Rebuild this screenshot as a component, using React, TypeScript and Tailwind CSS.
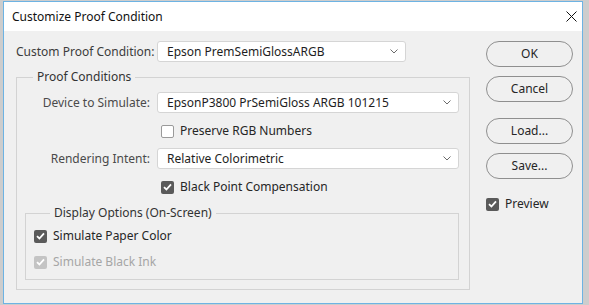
import React from "react";

const font = { fontFamily: '"Noto Sans", "Open Sans", sans-serif' };

const Chevron = () => (
  <svg width="8" height="5" viewBox="0 0 8 5" className="shrink-0">
    <path d="M0.5 0.5 L4 4 L7.5 0.5" fill="none" stroke="#6b6b6b" strokeWidth="1" />
  </svg>
);

interface SelectProps {
  value: string;
  width: string;
}

const Select: React.FC<SelectProps> = ({ value, width }) => (
  <div
    className={`${width} h-[21px] bg-white border border-[#d5d5d5] rounded-[3px] flex items-center justify-between pl-[9px] pr-[7px] text-[12px] text-[#1e1e1e]`}
  >
    <span className="leading-none whitespace-nowrap">{value}</span>
    <Chevron />
  </div>
);

interface CheckProps {
  label: string;
  checked?: boolean;
  disabled?: boolean;
}

const Check: React.FC<CheckProps> = ({ label, checked, disabled }) => (
  <div className="h-[20px] flex items-center gap-[6px]">
    {checked ? (
      <span
        className={`w-[13px] h-[13px] rounded-[2px] flex items-center justify-center ${
          disabled ? "bg-[#c4c4c4]" : "bg-[#5a5a5a]"
        }`}
      >
        <svg width="9" height="8" viewBox="0 0 9 8">
          <path d="M1 4.2 L3.4 6.5 L8 1.3" fill="none" stroke="#fff" strokeWidth="1.8" />
        </svg>
      </span>
    ) : (
      <span className="w-[13px] h-[13px] rounded-[2px] bg-white border border-[#9a9a9a]" />
    )}
    <span className={`text-[12px] whitespace-nowrap ${disabled ? "text-[#a6a6a6]" : "text-[#262626]"}`}>{label}</span>
  </div>
);

const Button: React.FC<{ label: string; className?: string }> = ({ label, className }) => (
  <div
    className={`w-[87px] h-[26px] rounded-full border border-[#8f8f8f] bg-[#f0f0f0] flex items-center justify-center text-[12px] text-[#262626] ${className ?? ""}`}
  >
    {label}
  </div>
);

export default function App() {
  return (
    <div className="w-[589px] h-[305px] bg-[#cdcdcd] pt-[1px] pl-[3px]" style={font}>
      <div className="w-[580px] h-[303px] border border-[#6db3e3] bg-[#f0f0f0] flex flex-col">
        {/* Title bar */}
        <div className="h-[29px] bg-white flex items-center justify-between pl-[8px] pr-[5px]">
          <span className="text-[12px] text-[#111]">Customize Proof Condition</span>
          <svg width="11" height="11" viewBox="0 0 11 11">
            <path d="M0.5 0.5 L10.5 10.5 M10.5 0.5 L0.5 10.5" stroke="#111" strokeWidth="1" />
          </svg>
        </div>

        {/* Content */}
        <div className="flex pl-[12px] pt-[10px]">
          {/* Left column */}
          <div className="w-[454px] flex flex-col">
            <div className="flex items-center h-[21px]">
              <span className="w-[134px] text-right text-[12px] text-[#3c3c3c] mr-[7px] whitespace-nowrap">
                Custom Proof Condition:
              </span>
              <Select value="Epson PremSemiGlossARGB" width="w-[249px]" />
            </div>

            <fieldset className="mt-[7px] border border-[#d3d3d3] pr-[10px] pb-[9px]">
              <legend className="ml-[16px] px-[4px] text-[12px] leading-[16px] text-[#333]">Proof Conditions</legend>

              <div className="flex items-center h-[21px] mt-[7px]">
                <span className="w-[133px] text-right text-[12px] text-[#4a4a4a] mr-[7px] whitespace-nowrap">
                  Device to Simulate:
                </span>
                <Select value="EpsonP3800 PrSemiGloss ARGB 101215" width="w-[302px]" />
              </div>
              <div className="pl-[144px] mt-[8px]">
                <Check label="Preserve RGB Numbers" />
              </div>
              <div className="flex items-center h-[21px] mt-[7px]">
                <span className="w-[133px] text-right text-[12px] text-[#4a4a4a] mr-[7px] whitespace-nowrap">
                  Rendering Intent:
                </span>
                <Select value="Relative Colorimetric" width="w-[302px]" />
              </div>
              <div className="pl-[144px] mt-[8px]">
                <Check label="Black Point Compensation" checked />
              </div>

              <fieldset className="ml-[8px] mt-[8px] border border-[#d3d3d3] pl-[8px] pb-[7px]">
                <legend className="ml-[16px] px-[4px] text-[12px] leading-[16px] text-[#333]">
                  Display Options (On-Screen)
                </legend>
                <div className="mt-[5px]">
                  <Check label="Simulate Paper Color" checked />
                </div>
                <div className="mt-[6px]">
                  <Check label="Simulate Black Ink" checked disabled />
                </div>
              </fieldset>
            </fieldset>
          </div>

          {/* Right column */}
          <div className="ml-[16px] flex flex-col">
            <Button label="OK" />
            <Button label="Cancel" className="mt-[9px]" />
            <Button label="Load..." className="mt-[16px]" />
            <Button label="Save..." className="mt-[9px]" />
            <div className="mt-[15px]">
              <Check label="Preview" checked />
            </div>
          </div>
        </div>
      </div>
    </div>
  );
}
